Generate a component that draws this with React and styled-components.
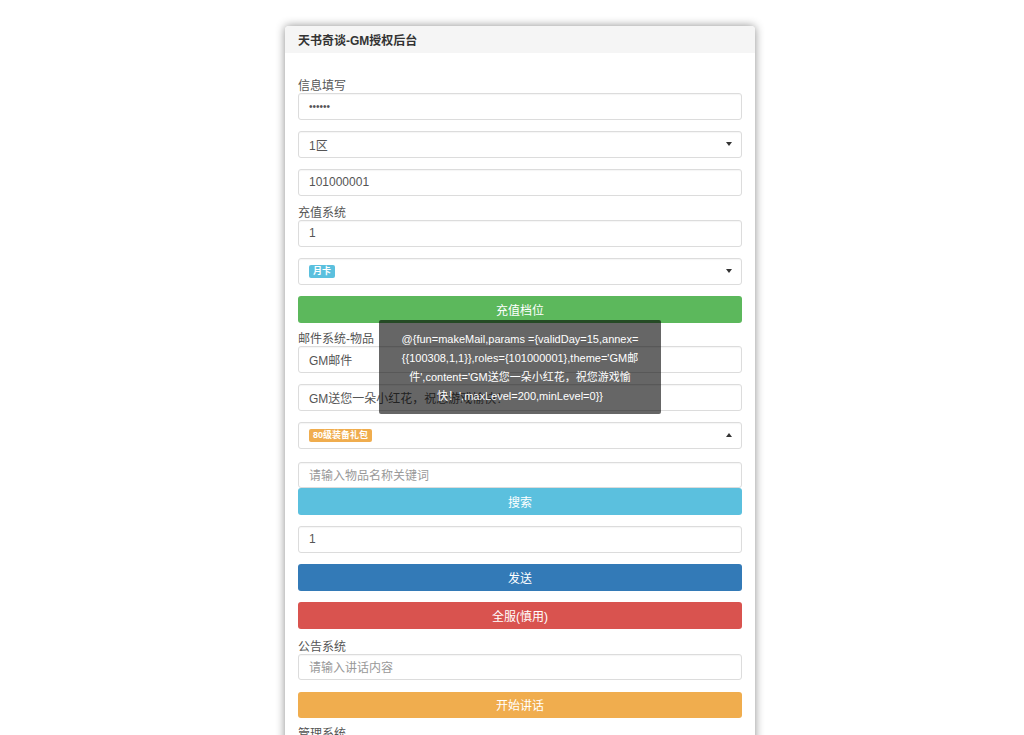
import React from 'react';
import styled, { createGlobalStyle } from 'styled-components';

const GlobalStyle = createGlobalStyle`
  body {
    margin: 0;
    background: #fff;
    font-family: "Liberation Sans", Arial, "Noto Sans CJK SC", sans-serif;
    color: #333;
  }
`;

const Page = styled.div`
  display: flex;
  justify-content: center;
  padding: 26px 0 0 16px;
  height: 735px;
  box-sizing: border-box;
  overflow: hidden;
`;

const Card = styled.div`
  width: 470px;
  height: 760px;
  background: #fff;
  border-radius: 4px;
  box-shadow: 0 0 10px rgba(0, 0, 0, 0.45);
  position: relative;
  flex-shrink: 0;
`;

const Header = styled.div`
  height: 27px;
  background: #f5f5f5;
  border-radius: 4px 4px 0 0;
  display: flex;
  align-items: center;
  padding: 0 13px;
  font-size: 12px;
  font-weight: bold;
  color: #333;
`;

const Body = styled.div`
  padding: 27px 13px 0;
  display: flex;
  flex-direction: column;
`;

const Label = styled.div`
  font-size: 12px;
  line-height: 13px;
  color: #555;
`;

const Field = styled.div`
  height: 26.5px;
  flex-shrink: 0;
  box-sizing: border-box;
  border: 1px solid #dcdcdc;
  border-radius: 3px;
  box-shadow: inset 0 1px 1px rgba(0, 0, 0, 0.04);
  display: flex;
  align-items: center;
  justify-content: space-between;
  padding: 0 10px;
  font-size: ${p => (p.$dots ? 10 : 12)}px;
  color: ${p => (p.$placeholder ? '#999' : '#555')};
  margin-bottom: ${p => (p.$mb === undefined ? 11.5 : p.$mb)}px;
`;

const Caret = styled.span`
  width: 0;
  height: 0;
  border-left: 3.5px solid transparent;
  border-right: 3.5px solid transparent;
  ${p =>
    p.$up
      ? 'border-bottom: 4px solid #333;'
      : 'border-top: 4px solid #333;'}
  margin-right: -1px;
`;

const Badge = styled.span`
  display: inline-block;
  background: ${p => p.$color};
  color: #fff;
  font-size: 9px;
  font-weight: bold;
  line-height: 13px;
  padding: 0 4px;
  border-radius: 2px;
`;

const Button = styled.div`
  height: 26.5px;
  flex-shrink: 0;
  box-sizing: border-box;
  border-radius: 3px;
  background: ${p => p.$color};
  color: #fff;
  font-size: 12px;
  display: flex;
  align-items: center;
  justify-content: center;
  margin-bottom: ${p => (p.$mb === undefined ? 11.5 : p.$mb)}px;
`;

const Tooltip = styled.div`
  position: absolute;
  left: 94px;
  top: 294px;
  width: 282px;
  box-sizing: border-box;
  padding: 10px 8px 8px;
  background: rgba(0, 0, 0, 0.6);
  border-radius: 2px;
  color: #fff;
  font-size: 11px;
  line-height: 19px;
  text-align: center;
  white-space: nowrap;
`;

export default function App() {
  return (
    <>
      <GlobalStyle />
      <Page>
        <Card>
          <Header>天书奇谈-GM授权后台</Header>
          <Body>
            <Label>信息填写</Label>
            <Field $dots>••••••</Field>
            <Field>
              1区
              <Caret />
            </Field>
            <Field>101000001</Field>

            <Label>充值系统</Label>
            <Field>1</Field>
            <Field>
              <Badge $color="#5bc0de">月卡</Badge>
              <Caret />
            </Field>
            <Button $color="#5cb85c" $mb={10.5}>充值档位</Button>

            <Label>邮件系统-物品</Label>
            <Field>GM邮件</Field>
            <Field>GM送您一朵小红花，祝您游戏愉快！</Field>
            <Field $mb={13}>
              <Badge $color="#f0ad4e">80级装备礼包</Badge>
              <Caret $up />
            </Field>
            <Field $placeholder $mb={0}>请输入物品名称关键词</Field>
            <Button $color="#5bc0de">搜索</Button>
            <Field>1</Field>
            <Button $color="#337ab7">发送</Button>
            <Button $color="#d9534f" $mb={12}>全服(慎用)</Button>

            <Label>公告系统</Label>
            <Field $placeholder>请输入讲话内容</Field>
            <Button $color="#f0ad4e" $mb={10}>开始讲话</Button>

            <Label>管理系统</Label>
          </Body>
          <Tooltip>
            @{'{fun=makeMail,params ={validDay=15,annex='}
            <br />
            {"{{100308,1,1}},roles={101000001},theme='GM邮"}
            <br />
            {"件',content='GM送您一朵小红花，祝您游戏愉"}
            <br />
            {"快！',maxLevel=200,minLevel=0}}"}
          </Tooltip>
        </Card>
      </Page>
    </>
  );
}
